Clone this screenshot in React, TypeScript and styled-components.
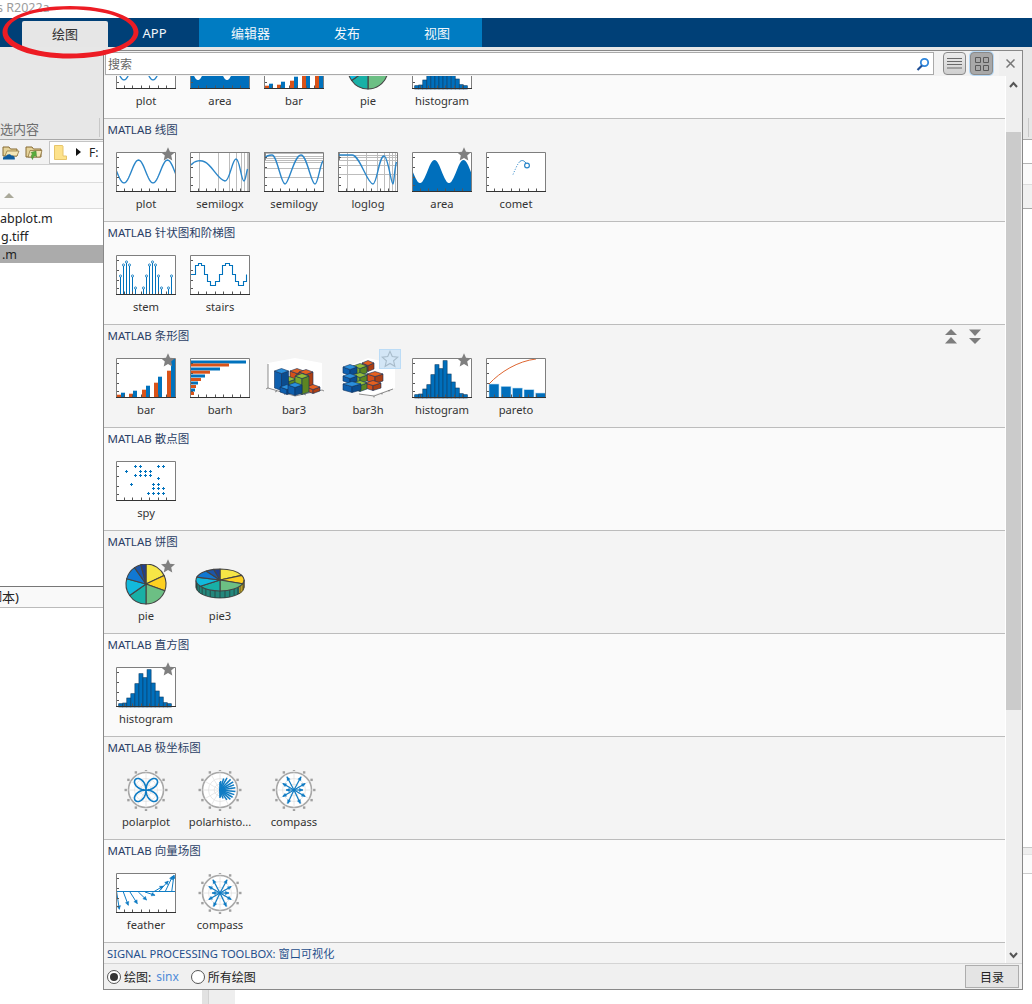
import React from "react";
import styled, { createGlobalStyle } from "styled-components";

const BLUE = "#0072bd";
const LINE = "#2b86c9";
const ORANGE = "#d95319";

const Global = createGlobalStyle`
  html, body { margin: 0; padding: 0; background: #fff; }
  body { font-family: "Noto Sans", "Noto Sans CJK SC", sans-serif; }
  * { box-sizing: border-box; }
`;

const Page = styled.div`
  position: relative;
  width: 1032px;
  height: 1004px;
  overflow: hidden;
  display: flex;
  flex-direction: column;
  background: #fff;
  font-size: 12px;
  color: #333;
`;
const TitleBar = styled.div`
  height: 18px;
  flex: none;
  overflow: hidden;
  background: #fff;
  color: #9c9c9c;
  font-size: 12.5px;
  line-height: 15px;
  text-indent: -3px;
  white-space: nowrap;
`;
const TabBar = styled.div`
  height: 29px;
  flex: none;
  display: flex;
  align-items: flex-end;
  padding-left: 22px;
  background: #004077;
`;
const Tab = styled.div<{ $w: number; $kind: "active" | "dark" | "light" }>`
  width: ${(p) => p.$w}px;
  height: ${(p) => (p.$kind === "active" ? 26 : 29)}px;
  display: flex;
  align-items: center;
  justify-content: center;
  padding-bottom: ${(p) => (p.$kind === "active" ? 1 : 0)}px;
  padding-left: ${(p) => (p.$kind === "dark" ? 2 : 0)}px;
  font-size: 13px;
  border-radius: ${(p) => (p.$kind === "active" ? "2px 2px 0 0" : "0")};
  color: ${(p) => (p.$kind === "active" ? "#333" : "#f2f7fb")};
  background: ${(p) => (p.$kind === "active" ? "#e6e6e6" : p.$kind === "light" ? "#007cc2" : "transparent")};
`;
const Ribbon = styled.div`
  height: 93px;
  flex: none;
  display: flex;
  align-items: flex-end;
  justify-content: space-between;
  background: #e7e7e7;
  border-bottom: 1px solid #a8a8a8;
  padding-right: 3px;
`;
const RibbonLabelGroup = styled.div`
  width: 100px;
  height: 19px;
  display: flex;
  justify-content: space-between;
  border-right: 1px solid #c8c8c8;
  margin-bottom: 2px;
`;
const RibbonLabel = styled.span`
  color: #6e6e6e;
  font-size: 13px;
  line-height: 19px;
  padding-top: 2px;
`;
const RibbonSep = styled.div`
  width: 1px;
  height: 19px;
  margin-bottom: 2px;
  background: #c8c8c8;
`;
const Columns = styled.div`
  flex: 1;
  min-height: 0;
  display: grid;
  grid-template-columns: 103px 1fr 9px;
`;
const LeftPane = styled.div`
  display: flex;
  flex-direction: column;
  overflow: hidden;
`;
const PathBar = styled.div`
  height: 25px;
  flex: none;
  display: flex;
  align-items: center;
  gap: 5px;
  padding-left: 2px;
  background: #f2f2f2;
  border-bottom: 1px solid #d0d0d0;
`;
const AddressBox = styled.div`
  flex: 1;
  height: 23px;
  margin-left: 1px;
  display: flex;
  align-items: center;
  padding-left: 4px;
  background: #fff;
  border: 1px solid #c4c4c4;
  border-right: 0;
  font-size: 12px;
  color: #222;
`;
const Crumb = styled.span`
  margin: 0 8px 0 9px;
  width: 0;
  height: 0;
  border-left: 5px solid #111;
  border-top: 4px solid transparent;
  border-bottom: 4px solid transparent;
`;
const BlankBand = styled.div`
  height: 18px;
  flex: none;
  background: #fbfbfb;
  border-bottom: 1px solid #dcdcdc;
`;
const FileHeader = styled.div`
  height: 26px;
  flex: none;
  display: flex;
  align-items: center;
  padding-left: 4px;
  background: #f9f9f9;
  border-bottom: 1px solid #dcdcdc;
`;
const SortMark = styled.span`
  width: 0;
  height: 0;
  border-left: 5px solid transparent;
  border-right: 5px solid transparent;
  border-bottom: 5px solid #aaa99a;
`;
const FileRow = styled.div<{ $selected?: boolean; $indent: number }>`
  height: 18px;
  flex: none;
  padding-left: ${(p) => p.$indent}px;
  font-size: 12.5px;
  line-height: 19px;
  white-space: nowrap;
  color: #222;
  background: ${(p) => (p.$selected ? "#ababab" : "#fff")};
`;
const PaneFill = styled.div`
  flex: 1;
  background: #fff;
`;
const ScriptRow = styled.div`
  height: 22px;
  flex: none;
  margin-top: 323px;
  font-size: 13px;
  line-height: 21px;
  text-indent: -11px;
  white-space: nowrap;
  color: #222;
  background: #f9f9f9;
  border-top: 1px solid #777;
  border-bottom: 1px solid #bbb;
`;
const MiddlePane = styled.div`
  display: flex;
  padding-left: 99px;
`;
const Sash = styled.div`
  width: 7px;
  background: #e2e2e2;
  border-right: 1px solid #d2d2d2;
`;
const SideStrip = styled.div`
  width: 26px;
  background: #eee;
`;
const RightPane = styled.div`
  display: flex;
  flex-direction: column;
`;
const RightBand = styled.div<{ $h: number; $bg: string; $line: string }>`
  height: ${(p) => p.$h}px;
  flex: none;
  background: ${(p) => p.$bg};
  border-bottom: 1px solid ${(p) => p.$line};
`;
const Popup = styled.div`
  position: absolute;
  left: 103px;
  top: 50px;
  width: 920px;
  height: 940px;
  display: flex;
  flex-direction: column;
  background: #f0f0f0;
  border: 1px solid #888;
`;
const SearchRow = styled.div`
  height: 25px;
  flex: none;
  display: flex;
  align-items: center;
  padding-left: 1px;
  background: #f2f2f2;
`;
const SearchBox = styled.div`
  width: 829px;
  height: 23px;
  display: flex;
  align-items: center;
  justify-content: space-between;
  padding: 0 2px 0 2px;
  background: #fff;
  border: 1px solid #aaa;
  color: #666;
  font-size: 12px;
`;
const ViewButton = styled.div<{ $on?: boolean }>`
  width: 23px;
  height: 23px;
  margin-left: ${(p) => (p.$on ? 4 : 9)}px;
  display: flex;
  align-items: center;
  justify-content: center;
  border-radius: 4px;
  border: 1px solid #8a8a8a;
  background: ${(p) => (p.$on ? "#a8a8a8" : "linear-gradient(#ececec, #cfcfcf)")};
  box-shadow: ${(p) => (p.$on ? "0 0 0 1px #b6d8f5" : "none")};
`;
const CloseButton = styled.div`
  width: 23px;
  height: 25px;
  margin-left: auto;
  display: flex;
  align-items: center;
  justify-content: center;
  background: #efefef;
`;
const Body = styled.div`
  flex: 1;
  min-height: 0;
  display: flex;
`;
const Gallery = styled.div`
  flex: 1;
  min-width: 0;
  overflow: hidden;
  border-right: 1px solid #fff;
`;
const Scrollbar = styled.div`
  width: 16px;
  flex: none;
  display: flex;
  flex-direction: column;
  background: #efefef;
`;
const ArrowCell = styled.div<{ $h: number; $end?: boolean }>`
  height: ${(p) => p.$h}px;
  display: flex;
  justify-content: center;
  margin-right: 1px;
  align-items: ${(p) => (p.$end ? "flex-end" : "flex-start")};
  padding: ${(p) => (p.$end ? "0 0 4px" : "5px 0 0")};
  margin-top: ${(p) => (p.$end ? "auto" : "0")};
`;
const Thumb = styled.div`
  height: 578px;
  margin-right: 1px;
  background: #cbcbcb;
`;
const SectionList = styled.div`
  margin-top: -60px;
`;
const Section = styled.section<{ $odd: boolean }>`
  height: 103px;
  background: ${(p) => (p.$odd ? "#fafafa" : "#f4f4f4")};
  border-bottom: 1px solid #bcbcbc;
`;
const SectionHead = styled.div`
  height: 22px;
  display: flex;
  align-items: center;
  justify-content: space-between;
  padding: 0 23px 0 3.5px;
`;
const SectionTitle = styled.h3`
  margin: 0;
  font-size: 11.5px;
  line-height: 22px;
  font-weight: 400;
  color: #2b3f66;
`;
const FooterSection = styled(SectionTitle)`
  height: 21px;
  padding-left: 3px;
  font-size: 11.2px;
  line-height: 21px;
  background: #f4f4f4;
  color: #1f4f8c;
`;
const NavArrows = styled.div`
  display: flex;
  gap: 10px;
`;
const ItemRow = styled.div`
  display: flex;
  padding: 11px 0 0 5px;
`;
const Item = styled.div`
  width: 74px;
  display: flex;
  flex-direction: column;
  align-items: center;
`;
const ThumbBox = styled.div`
  position: relative;
  width: 60px;
  height: 41px;
`;
const StarBadge = styled.div`
  position: absolute;
  left: 44px;
  top: -6px;
  width: 16px;
  height: 16px;
  display: flex;
`;
const StarHover = styled.div`
  position: absolute;
  left: 41px;
  top: -9px;
  width: 22px;
  height: 20px;
  display: flex;
  align-items: center;
  justify-content: center;
  background: #d3e6f6;
  border: 1px solid #bcdcf6;
`;
const ItemLabel = styled.div`
  margin-top: 3px;
  font-size: 11.2px;
  line-height: 16px;
  color: #333;
  white-space: nowrap;
`;
const Footer = styled.div`
  height: 26px;
  flex: none;
  display: flex;
  align-items: center;
  padding: 0 3px;
  background: #f0f0f0;
  border-top: 1px solid #d4d4d4;
  color: #222;
  font-size: 12px;
`;
const Radio = styled.span<{ $on?: boolean; $gap?: number }>`
  width: 14px;
  height: 14px;
  flex: none;
  margin: 0 3px 0 ${(p) => p.$gap ?? 0}px;
  display: flex;
  align-items: center;
  justify-content: center;
  border-radius: 50%;
  background: #fff;
  border: 1px solid #555;
  &::after {
    content: "";
    width: 8px;
    height: 8px;
    border-radius: 50%;
    background: ${(p) => (p.$on ? "#333" : "transparent")};
  }
`;
const PlotName = styled.span`
  margin-left: 5px;
  color: #4d8bd8;
`;
const TocButton = styled.div`
  width: 54px;
  height: 23px;
  margin-left: auto;
  display: flex;
  align-items: center;
  justify-content: center;
  background: #e4e4e4;
  border: 1px solid #adadad;
  color: #222;
`;
const RedMark = styled.svg`
  position: absolute;
  left: 0;
  top: 0;
  width: 145px;
  height: 64px;
  pointer-events: none;
`;
const Glyph = styled.svg`
  display: block;
  flex: none;
`;

/* ---------- drawing helpers ---------- */
const wave = (f: (x: number) => number, from = 0.5, to = 59.5, step = 1) => {
  let d = "";
  for (let x = from; x <= to; x += step) d += `${d ? "L" : "M"}${x.toFixed(1)} ${f(x).toFixed(1)}`;
  return d;
};
const sine = (x: number) => 19.5 + 11.5 * Math.sin((2 * Math.PI * (x - 8)) / 29 + Math.PI / 2);

const Frame = ({ children }: { children?: React.ReactNode }) => (
  <Glyph width={60} height={41} viewBox="0 0 60 41">
    <rect x={0} y={0} width={60} height={40} fill="#fff" />
    {children}
    <g stroke="#555" strokeWidth={1}>
      {[8.5, 16.5, 25.5, 33.5, 42.5, 50.5].map((x) => (
        <path key={x} d={`M${x} 39V36.5`} />
      ))}
      {[5.5, 15.5, 25.5, 33.5].map((y) => (
        <path key={y} d={`M1 ${y}H3`} />
      ))}
    </g>
    <path d="M.5 40V.5H59.5V40" fill="none" stroke="#7e7e7e" />
    <path d="M0 39.5H60" stroke="#333" />
  </Glyph>
);

const Curve = ({ d }: { d: string }) => <path d={d} fill="none" stroke={LINE} strokeWidth={1.4} />;

const PlotChart = () => (
  <Frame>
    <Curve d={wave(sine)} />
  </Frame>
);
const SemilogX = () => (
  <Frame>
    <g stroke="#bdbdbd">
      {[9.5, 28.5, 39.5, 46.5, 51.5, 54.5, 57.5, 58.5].map((x) => (
        <path key={x} d={`M${x} 0V40`} />
      ))}
    </g>
    <Curve d="M1 13C5 8 11 8 15 10C22 13 28 28 35 29C40 29 42 7 46 7C50 7 51 29 54 29C55.500 29 56 22 57.500 17" />
  </Frame>
);
const SemilogY = () => (
  <Frame>
    <g stroke="#bdbdbd">
      {[1.5, 4.5, 6.5, 8.5, 10.5, 16.5, 25.5].map((y) => (
        <path key={y} d={`M0 ${y}H60`} />
      ))}
    </g>
    <path d="M0 0H2V8H0Z" fill="#888" />
    <Curve d="M1 6C3 3 5 3 8 3C13 3 17 32 21 32C25 32 30 3 37 3C43 3 47 32 51 32C54 32 56 12 59 9" />
  </Frame>
);
const LogLog = () => (
  <Frame>
    <g stroke="#bdbdbd">
      {[3.5, 5.5, 8.5, 13.5, 22.5].map((y) => (
        <path key={y} d={`M0 ${y}H60`} />
      ))}
      {[9.5, 28.5, 39.5, 46.5, 51.5, 54.5, 57.5].map((x) => (
        <path key={x} d={`M${x} 0V40`} />
      ))}
    </g>
    <path d="M0 0H2V8H0Z" fill="#888" />
    <Curve d="M1 3H14C22 3 29 32 35 32C39 32 41 4 46 4C50 4 53 32 55 32C56 32 56.500 16 58.500 10" />
  </Frame>
);
const AreaChart = () => (
  <Frame>
    <path d={`${wave(sine)}L59.500 40H.5Z`} fill="#006fbc" />
  </Frame>
);
const CometChart = () => (
  <Frame>
    <path d="M27 22.500C29 18 31 13 33 10.500" fill="none" stroke={LINE} strokeWidth={1} strokeDasharray="1 1.600" />
    <path d="M33 10.500C35 8 38 7 41 13" fill="none" stroke={LINE} strokeWidth={1} />
    <circle cx={41} cy={13.500} r={2.400} fill="#fff" stroke={LINE} strokeWidth={1.200} />
  </Frame>
);
const stemData = [
  [4.5, 21], [7.5, 10], [10.5, 7], [13.5, 10], [16.5, 21], [19.5, 33], [27.5, 33], [30.5, 21],
  [33.5, 10], [36.5, 7], [39.5, 10], [42.5, 21], [45.5, 33], [52.5, 33], [55.5, 21],
];
const StemChart = () => (
  <Frame>
    {stemData.map(([x, y]) => (
      <g key={x} stroke="#0072bd" fill="#fff">
        <path d={`M${x} ${y}V40`} strokeWidth={1} />
        <circle cx={x} cy={y} r={1.100} strokeWidth={0.8} />
      </g>
    ))}
  </Frame>
);
const StairsChart = () => (
  <Frame>
    <path
      d="M1 19.500H5.500V10.500H8.500V8.500H11.500V10.500H14.500V19.500H17.500V26.500H20.500V30.500H25.500V26.500H29.500V19.500H32.500V10.500H35.500V8.500H39.500V10.500H42.500V19.500H45.500V26.500H48.500V30.500H53.500V26.500H56.500V19.500"
      fill="none"
      stroke={BLUE}
      strokeWidth={1.100}
    />
  </Frame>
);
const barData: [number, number, string][] = [
  [1, 36.7, ORANGE], [5, 34.7, BLUE], [13, 35.7, ORANGE], [17, 32.7, BLUE], [26, 31.7, ORANGE],
  [30, 27.7, BLUE], [38, 24.7, ORANGE], [42, 18.7, BLUE], [51, 12.7, ORANGE], [55, 0, BLUE],
];
const BarChart = () => (
  <Frame>
    {barData.map(([x, y, c]) => (
      <rect key={x} x={x} y={y} width={4} height={40 - y} fill={c} />
    ))}
  </Frame>
);
const barhData: [number, number, string][] = [
  [2.5, 55, BLUE], [5.5, 38, ORANGE], [9.5, 29, BLUE], [12.7, 19, ORANGE], [16.5, 14, BLUE],
  [20, 10, ORANGE], [23.5, 7, BLUE], [27, 5, ORANGE], [30.5, 4, BLUE], [34, 3, ORANGE],
];
const BarhChart = () => (
  <Frame>
    {barhData.map(([y, w, c]) => (
      <rect key={y} x={1} y={y} width={w} height={3} fill={c} />
    ))}
  </Frame>
);
const histData = [36.7, 36, 31, 26.7, 16.7, 6.7, 10.7, 2.7, 16, 24, 30, 35.7, 36.7];
const HistChart = () => (
  <Frame>
    {histData.map((y, i) => (
      <rect key={i} x={2.7 + i * 4.05} y={y} width={4.05} height={40 - y} fill="#006fbc" stroke="#0a3c66" strokeWidth={0.6} />
    ))}
  </Frame>
);
const paretoData: [number, number][] = [[3, 26], [15, 28.3], [26.5, 30], [38, 31.7], [49.5, 35]];
const ParetoChart = () => (
  <Frame>
    {paretoData.map(([x, y]) => (
      <rect key={x} x={x} y={y} width={10} height={40 - y} fill="#006fbc" stroke="#bfe0f5" strokeWidth={0.6} />
    ))}
    <path d="M3 26C14 14 32 3 50 1" fill="none" stroke={ORANGE} strokeWidth={0.9} />
  </Frame>
);
const spyZoom: [number, number][] = [
  [106, 424], [120, 424], [175, 424], [190, 424], [79, 438], [120, 438], [136, 438], [151, 438],
  [106, 451], [120, 451], [136, 451], [151, 451], [175, 460], [94, 477], [160, 477], [175, 477],
  [160, 490], [175, 490], [190, 490], [145, 505], [160, 505], [175, 505], [190, 505],
];
const SpyChart = () => (
  <Frame>
    {spyZoom.map(([zx, zy]) => {
      const x = Math.round((zx - 48) / 3) + 0.5;
      const y = Math.round((zy - 408) / 3) + 0.5;
      return <path key={`${zx}-${zy}`} d={`M${x - 1.5} ${y}H${x + 1.5}M${x} ${y - 1.5}V${y + 1.5}`} stroke={BLUE} strokeWidth={1} />;
    })}
  </Frame>
);

const Art = ({ children }: { children?: React.ReactNode }) => (
  <Glyph width={60} height={41} viewBox="0 0 60 41">
    {children}
  </Glyph>
);

type Pal = [string, string, string];
const PBLUE: Pal = ["#2a8fdc", "#0e5fae", "#0b4c8e"];
const PGREEN: Pal = ["#93bd38", "#79a62c", "#5c8522"];
const PORANGE: Pal = ["#e6601f", "#d3501a", "#ad3f13"];
const Prism = ({ cx, y, yb, rx = 7, ry = 2.5, pal }: { cx: number; y: number; yb: number; rx?: number; ry?: number; pal: Pal }) => (
  <g stroke="#12315a" strokeWidth={0.6} strokeLinejoin="round">
    <path d={`M${cx - rx} ${y}L${cx} ${y + ry}V${yb + ry}L${cx - rx} ${yb}Z`} fill={pal[1]} />
    <path d={`M${cx + rx} ${y}L${cx} ${y + ry}V${yb + ry}L${cx + rx} ${yb}Z`} fill={pal[2]} />
    <path d={`M${cx - rx} ${y}L${cx} ${y - ry}L${cx + rx} ${y}L${cx} ${y + ry}Z`} fill={pal[0]} />
  </g>
);
const Bar3Chart = () => (
  <Art>
    <path d="M4 5L31 0L58 5V32L31 38L4 30Z" fill="#fff" />
    <path d="M4 6V30L31 38L58 32M4 30L2 31M13 33L11 34M22 35.500L20 36.500M40 36L42 37M49 34L51 35M58 32L60 33" fill="none" stroke="#444" strokeWidth={0.6} />
    <Prism cx={33} y={13} yb={25} pal={PORANGE} />
    <Prism cx={42} y={14} yb={28} pal={PORANGE} />
    <Prism cx={25} y={21} yb={30} pal={PGREEN} />
    <Prism cx={49} y={29} yb={33} pal={PORANGE} />
    <Prism cx={17.500} y={13} yb={30} pal={PBLUE} />
    <Prism cx={38} y={18} yb={34} pal={PGREEN} />
    <Prism cx={23} y={29} yb={34} pal={PBLUE} />
    <Prism cx={31} y={27} yb={35} pal={PBLUE} />
  </Art>
);
const Bar3hChart = () => (
  <Art>
    <path d="M8 9L30 0L57 6V30L30 38L4 30Z" fill="#fff" />
    <path d="M21 36L36 38L55 31M36 38L36 39.500M44 35L44 36.500M51 32L51 33.500" fill="none" stroke="#444" strokeWidth={0.6} />
    <Prism cx={30} y={5} yb={11} rx={6} pal={PORANGE} />
    <Prism cx={37} y={16} yb={23} rx={8} pal={PORANGE} />
    <Prism cx={35} y={25} yb={30} rx={8} pal={PORANGE} />
    <Prism cx={22} y={8} yb={15} pal={PGREEN} />
    <Prism cx={22} y={17} yb={23} pal={PGREEN} />
    <Prism cx={22} y={25} yb={31} pal={PGREEN} />
    <Prism cx={12} y={9} yb={15} pal={PBLUE} />
    <Prism cx={12} y={18} yb={23} pal={PBLUE} />
    <Prism cx={14} y={26} yb={32} rx={9} pal={PBLUE} />
  </Art>
);

const pieSlices: [number, number, string][] = [
  [0, 65, "#f6e646"], [65, 110, "#fdd022"], [110, 180, "#6cbf84"], [180, 235, "#18b0a6"],
  [235, 285, "#12b9dc"], [285, 325, "#1178d2"], [325, 345, "#1c55a8"], [345, 360, "#203f8e"],
];
const at = (cx: number, cy: number, rx: number, ry: number, deg: number): [number, number] => {
  const a = ((deg - 90) * Math.PI) / 180;
  return [cx + rx * Math.cos(a), cy + ry * Math.sin(a)];
};
const PieTop = ({ cx, cy, rx, ry }: { cx: number; cy: number; rx: number; ry: number }) => (
  <g stroke="#444" strokeWidth={1.1} strokeLinejoin="round">
    {pieSlices.map(([s, e, c]) => {
      const [x1, y1] = at(cx, cy, rx, ry, s);
      const [x2, y2] = at(cx, cy, rx, ry, e);
      return (
        <path
          key={s}
          d={`M${cx} ${cy}L${x1.toFixed(2)} ${y1.toFixed(2)}A${rx} ${ry} 0 0 1 ${x2.toFixed(2)} ${y2.toFixed(2)}Z`}
          fill={c}
        />
      );
    })}
  </g>
);
const PieChart = () => (
  <Art>
    <PieTop cx={30} cy={20} rx={20} ry={20} />
  </Art>
);
const Pie3Chart = () => {
  const cx = 30;
  const cy = 16;
  const rx = 24;
  const ry = 11;
  const t = 7;
  return (
    <Art>
      <path d={`M${cx - rx} ${cy}v${t}A${rx} ${ry} 0 0 0 ${cx + rx} ${cy + t}v${-t}Z`} fill="#23877c" stroke="#333" strokeWidth={0.8} />
      <path d={`M${cx + 19} ${cy + 7}A${rx} ${ry} 0 0 0 ${cx + rx} ${cy}v${t}A${rx} ${ry} 0 0 1 ${cx + 19} ${cy + 14}Z`} fill="#d8b828" stroke="#333" strokeWidth={0.6} />
      <g stroke="#2a2a2a" strokeWidth={0.6}>
        {Array.from({ length: 15 }, (_, i) => {
          const a = (i * 12 + 6) * (Math.PI / 180);
          const x = cx + rx * Math.cos(a);
          const y = cy + ry * Math.sin(a);
          return <path key={i} d={`M${x.toFixed(2)} ${y.toFixed(2)}v${t}`} />;
        })}
      </g>
      <PieTop cx={cx} cy={cy} rx={rx} ry={ry} />
    </Art>
  );
};

const PolarBase = ({ children }: { children?: React.ReactNode }) => {
  const cx = 30;
  const cy = 20;
  const r = 17.500;
  const angles = Array.from({ length: 12 }, (_, i) => i * 30);
  return (
    <Art>
      <circle cx={cx} cy={cy} r={r} fill="#fff" stroke="#a8a8a8" strokeWidth={1.600} />
      <circle cx={cx} cy={cy} r={11.500} fill="none" stroke="#e2e2e2" strokeWidth={0.8} />
      <circle cx={cx} cy={cy} r={5.800} fill="none" stroke="#e2e2e2" strokeWidth={0.8} />
      {angles.map((a) => {
        const [x1, y1] = at(cx, cy, r, r, a);
        const [x2, y2] = at(cx, cy, r + 2.800, r + 2.800, a);
        return (
          <g key={a}>
            <path d={`M${cx} ${cy}L${x1.toFixed(2)} ${y1.toFixed(2)}`} stroke="#e2e2e2" strokeWidth={0.8} />
            <rect x={x2 - 1.2} y={y2 - 1.2} width={2.4} height={2.4} fill="#a0a0a0" />
          </g>
        );
      })}
      {children}
    </Art>
  );
};
const rose = () => {
  let d = "";
  for (let deg = 0; deg <= 360; deg += 4) {
    const a = (deg * Math.PI) / 180;
    const rr = 15 * Math.abs(Math.sin(2 * a));
    d += `${d ? "L" : "M"}${(30 + rr * Math.cos(a)).toFixed(2)} ${(20 + rr * Math.sin(a)).toFixed(2)}`;
  }
  return `${d}Z`;
};
const PolarPlot = () => (
  <PolarBase>
    <path d={rose()} fill="none" stroke="#0f7cc4" strokeWidth={1.600} />
  </PolarBase>
);
const PolarHist = () => (
  <PolarBase>
    <g stroke="#0f7cc4" strokeWidth={1.500}>
      {[[-85, 9], [-72, 12], [-60, 14], [-45, 15], [-32, 15.5], [-20, 15], [-8, 15.5], [6, 15.5], [18, 15], [30, 14.5], [42, 14], [55, 12], [70, 9], [85, 7]].map(([a, l]) => {
        const rad = (a * Math.PI) / 180;
        return <path key={a} d={`M30 20L${(30 + l * Math.cos(rad)).toFixed(2)} ${(20 + l * Math.sin(rad)).toFixed(2)}`} />;
      })}
      <path d="M30 12V28" />
    </g>
  </PolarBase>
);
const CompassChart = () => (
  <PolarBase>
    {[[-118, 15], [-62, 15], [-150, 13], [-30, 13], [180, 8], [0, 9], [150, 13], [30, 13], [115, 15], [65, 15]].map(([a, l]) => {
      const rad = (a * Math.PI) / 180;
      const x = 30 + l * Math.cos(rad);
      const y = 20 + l * Math.sin(rad);
      const h = 4;
      const p1x = x - h * Math.cos(rad - 0.45);
      const p1y = y - h * Math.sin(rad - 0.45);
      const p2x = x - h * Math.cos(rad + 0.45);
      const p2y = y - h * Math.sin(rad + 0.45);
      return (
        <g key={a} stroke="#0f7cc4" fill="#0f7cc4" strokeWidth={1.200}>
          <path d={`M30 20L${x.toFixed(2)} ${y.toFixed(2)}`} />
          <path d={`M${x.toFixed(2)} ${y.toFixed(2)}L${p1x.toFixed(2)} ${p1y.toFixed(2)}L${p2x.toFixed(2)} ${p2y.toFixed(2)}Z`} strokeWidth={0.3} />
        </g>
      );
    })}
  </PolarBase>
);
const featherZoom = [
  [50, 58, 510], [70, 85, 498], [90, 112, 493], [115, 140, 482], [135, 165, 468],
  [160, 190, 440], [175, 205, 425], [195, 218, 410], [215, 222, 407],
];
const FeatherChart = () => (
  <Frame>
    <path d="M0 18.500H60" stroke="#0f7cc4" strokeWidth={1} />
    {featherZoom.map(([bx, tx, ty]) => {
      const x0 = (bx - 48) / 3;
      const x = (tx - 48) / 3;
      const y = (ty - 401) / 3;
      const rad = Math.atan2(y - 19, x - x0);
      const h = 4;
      return (
        <g key={bx} stroke="#0f7cc4" fill="#0f7cc4" strokeWidth={1}>
          <path d={`M${x0} 19L${x.toFixed(2)} ${y.toFixed(2)}`} />
          <path
            d={`M${x.toFixed(2)} ${y.toFixed(2)}L${(x - h * Math.cos(rad - 0.5)).toFixed(2)} ${(y - h * Math.sin(rad - 0.5)).toFixed(2)}L${(x - h * Math.cos(rad + 0.5)).toFixed(2)} ${(y - h * Math.sin(rad + 0.5)).toFixed(2)}Z`}
            strokeWidth={0.3}
          />
        </g>
      );
    })}
  </Frame>
);

const STAR = "M8 1.200L10 5.800L15 6.300L11.200 9.600L12.300 14.500L8 12L3.700 14.500L4.800 9.600L1 6.300L6 5.800Z";
const FilledStar = () => (
  <Glyph width={16} height={16} viewBox="0 0 16 16">
    <path d={STAR} fill="#7f7f7f" />
  </Glyph>
);
const OutlineStar = () => (
  <Glyph width={18} height={18} viewBox="0 0 16 16">
    <path d={STAR} fill="none" stroke="#a8bccb" strokeWidth={1} />
  </Glyph>
);

type Entry = { label: string; chart: React.ComponentType; star?: boolean; hover?: boolean };
const plot: Entry = { label: "plot", chart: PlotChart, star: true };
const area: Entry = { label: "area", chart: AreaChart, star: true };
const bar: Entry = { label: "bar", chart: BarChart, star: true };
const pie: Entry = { label: "pie", chart: PieChart, star: true };
const histogram: Entry = { label: "histogram", chart: HistChart, star: true };
const compass: Entry = { label: "compass", chart: CompassChart };

const sections: { title: string; items: Entry[]; nav?: boolean }[] = [
  { title: "", items: [plot, area, bar, pie, histogram].map((e) => ({ ...e, star: false })) },
  {
    title: "MATLAB 线图",
    items: [
      plot,
      { label: "semilogx", chart: SemilogX },
      { label: "semilogy", chart: SemilogY },
      { label: "loglog", chart: LogLog },
      area,
      { label: "comet", chart: CometChart },
    ],
  },
  {
    title: "MATLAB 针状图和阶梯图",
    items: [
      { label: "stem", chart: StemChart },
      { label: "stairs", chart: StairsChart },
    ],
  },
  {
    title: "MATLAB 条形图",
    nav: true,
    items: [
      bar,
      { label: "barh", chart: BarhChart },
      { label: "bar3", chart: Bar3Chart },
      { label: "bar3h", chart: Bar3hChart, hover: true },
      histogram,
      { label: "pareto", chart: ParetoChart },
    ],
  },
  { title: "MATLAB 散点图", items: [{ label: "spy", chart: SpyChart }] },
  { title: "MATLAB 饼图", items: [pie, { label: "pie3", chart: Pie3Chart }] },
  { title: "MATLAB 直方图", items: [histogram] },
  {
    title: "MATLAB 极坐标图",
    items: [
      { label: "polarplot", chart: PolarPlot },
      { label: "polarhisto...", chart: PolarHist },
      compass,
    ],
  },
  { title: "MATLAB 向量场图", items: [{ label: "feather", chart: FeatherChart }, compass] },
];

const Triangles = ({ up }: { up: boolean }) => (
  <Glyph width={14} height={15} viewBox="0 0 14 15">
    <g fill="#7d7d7d" transform={up ? undefined : "matrix(1 0 0 -1 0 15)"}>
      <path d="M7 0L13 6H1Z" />
      <path d="M7 8L13 14.500H1Z" />
    </g>
  </Glyph>
);
const Chevron = ({ up }: { up: boolean }) => (
  <Glyph width={9} height={7} viewBox="0 0 9 7">
    <path d={up ? "M1 6L4.500 2L8 6" : "M1 1L4.500 5L8 1"} fill="none" stroke="#555" strokeWidth={2} />
  </Glyph>
);

const App = () => (
  <Page>
    <Global />
    <TitleBar>s R2022a</TitleBar>
    <TabBar>
      <Tab $w={86} $kind="active">绘图</Tab>
      <Tab $w={91} $kind="dark">APP</Tab>
      <Tab $w={103} $kind="light">编辑器</Tab>
      <Tab $w={90} $kind="light">发布</Tab>
      <Tab $w={90} $kind="light">视图</Tab>
    </TabBar>
    <Ribbon>
      <RibbonLabelGroup>
        <RibbonLabel>选内容</RibbonLabel>
      </RibbonLabelGroup>
      <RibbonSep />
    </Ribbon>
    <Columns>
      <LeftPane>
        <PathBar>
          <Glyph width={18} height={17} viewBox="0 0 18 17">
            <path d="M1 3H7L8.500 5H15V12H1Z" fill="#e5d39a" stroke="#866a33" />
            <path d="M5 7H17L15 12H3Z" fill="#f3e6b9" stroke="#866a33" strokeWidth={0.7} />
            <path d="M1 15.500C.5 13 2.500 12 4 12.300C4.800 10 8 9.500 9.500 11.500C11.500 11 13 12.500 12.800 14.500V15.500Z" fill="#0f5c9f" />
          </Glyph>
          <Glyph width={18} height={17} viewBox="0 0 18 17">
            <path d="M1 3H7L8.500 5H16V13H1Z" fill="#e5d39a" stroke="#866a33" />
            <path d="M5 6.500H17L15 13H3Z" fill="#f3e6b9" stroke="#866a33" strokeWidth={0.7} />
            <path d="M11 7L6 8.500L7.500 10C6 11 6 13 7.500 15.500C8 13 9 12 10.500 11.800L11.500 13Z" fill="#58ad3c" stroke="#3d7d2a" strokeWidth={0.5} />
          </Glyph>
          <AddressBox>
            <Glyph width={13} height={15} viewBox="0 0 13 15">
              <path d="M.5.5H8.500L9 1V11H12.500V14.500H.5Z" fill="#fde28b" stroke="#e7c56a" />
            </Glyph>
            <Crumb />
            F:
          </AddressBox>
        </PathBar>
        <BlankBand />
        <FileHeader>
          <SortMark />
        </FileHeader>
        <FileRow $indent={0}>abplot.m</FileRow>
        <FileRow $indent={1}>g.tiff</FileRow>
        <FileRow $selected $indent={2}>.m</FileRow>
        <ScriptRow>脚本)</ScriptRow>
        <PaneFill />
      </LeftPane>
      <MiddlePane>
        <Sash />
        <SideStrip />
      </MiddlePane>
      <RightPane>
        <RightBand $h={24} $bg="#fff" $line="#b4b4b4" />
        <RightBand $h={21} $bg="#fafafa" $line="#dcdcdc" />
        <RightBand $h={24} $bg="#f1f1f1" $line="#a8a8a8" />
        <RightBand $h={639} $bg="#fff" $line="#c8c8c8" />
        <RightBand $h={7} $bg="#eeeeee" $line="#e2e2e2" />
        <RightBand $h={19} $bg="#fbfbfb" $line="#cccccc" />
        <PaneFill />
      </RightPane>
    </Columns>

    <Popup>
      <SearchRow>
        <SearchBox>
          搜索
          <Glyph width={16} height={16} viewBox="0 0 16 16">
            <circle cx={9.500} cy={6.500} r={3.700} fill="#fff" stroke="#2f86dc" strokeWidth={1.800} />
            <path d="M7 9.500L2.500 14" stroke="#1f4f96" strokeWidth={2.200} />
          </Glyph>
        </SearchBox>
        <ViewButton>
          <Glyph width={15} height={11} viewBox="0 0 15 11">
            <path d="M0 .5H15M0 3.500H15M0 6.500H15M0 10H15" stroke="#6a6a6a" />
          </Glyph>
        </ViewButton>
        <ViewButton $on>
          <Glyph width={16} height={16} viewBox="0 0 16 16">
            <path d="M1.500 1.500H6.500V6.500H1.500ZM9.500 1.500H14.500V6.500H9.500ZM1.500 9.500H6.500V14.500H1.500ZM9.500 9.500H14.500V14.500H9.500Z" fill="none" stroke="#5a5a5a" />
          </Glyph>
        </ViewButton>
        <CloseButton>
          <Glyph width={9} height={9} viewBox="0 0 9 9">
            <path d="M.5 .5L8.500 8.500M8.500 .5L.5 8.500" stroke="#777" strokeWidth={1.500} />
          </Glyph>
        </CloseButton>
      </SearchRow>
      <Body>
        <Gallery>
          <SectionList>
            {sections.map((s, i) => (
              <Section key={s.title || "recent"} $odd={i % 2 === 0}>
                <SectionHead>
                  <SectionTitle>{s.title}</SectionTitle>
                  {s.nav && (
                    <NavArrows>
                      <Triangles up />
                      <Triangles up={false} />
                    </NavArrows>
                  )}
                </SectionHead>
                <ItemRow>
                  {s.items.map((it) => (
                    <Item key={it.label}>
                      <ThumbBox>
                        <it.chart />
                        {it.star && (
                          <StarBadge>
                            <FilledStar />
                          </StarBadge>
                        )}
                        {it.hover && (
                          <StarHover>
                            <OutlineStar />
                          </StarHover>
                        )}
                      </ThumbBox>
                      <ItemLabel>{it.label}</ItemLabel>
                    </Item>
                  ))}
                </ItemRow>
              </Section>
            ))}
            <FooterSection>SIGNAL PROCESSING TOOLBOX: 窗口可视化</FooterSection>
          </SectionList>
        </Gallery>
        <Scrollbar>
          <ArrowCell $h={56}>
            <Chevron up />
          </ArrowCell>
          <Thumb />
          <ArrowCell $h={20} $end>
            <Chevron up={false} />
          </ArrowCell>
        </Scrollbar>
      </Body>
      <Footer>
        <Radio $on />
        绘图:
        <PlotName>sinx</PlotName>
        <Radio $gap={12} />
        所有绘图
        <TocButton>目录</TocButton>
      </Footer>
    </Popup>

    <RedMark viewBox="0 0 145 64">
      <path
        fillRule="evenodd"
        fill="#ed1c24"
        d="M2.500 32.500C2.500 17 32 6 70 6C108 6 138.500 17 138.500 32C138.500 47 108 58.500 70 58.500C32 58.500 2.500 48 2.500 32.500ZM7.500 31.500C7.500 43 34 53.500 70 53.500C106 53.500 133.500 44 133.500 32C133.500 19.500 106 9.500 70 9.500C34 9.500 7.500 18.500 7.500 31.500Z"
      />
    </RedMark>
  </Page>
);

export default App;
